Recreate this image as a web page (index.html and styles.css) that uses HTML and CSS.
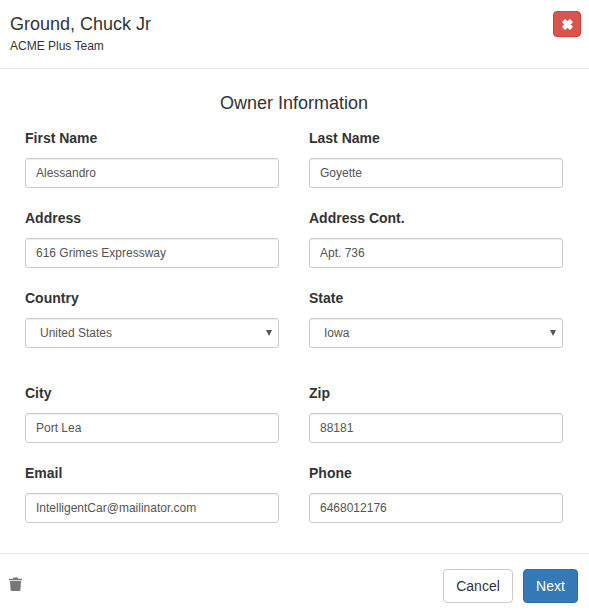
FILE: index.html
```html
<!DOCTYPE html>
<html lang="en">
<head>
<meta charset="utf-8">
<title>Owner Information</title>
<link rel="stylesheet" href="styles.css">
</head>
<body>
<div class="modal">
  <header class="modal-header">
    <div class="who">
      <h4 class="name">Ground, Chuck Jr</h4>
      <div class="team">ACME Plus Team</div>
    </div>
    <button class="close" type="button" aria-label="Close">
      <svg viewBox="0 0 12 12" width="13" height="13" aria-hidden="true"><path d="M1.4 3.2 3.2 1.4a.9.9 0 0 1 1.2 0L6 3l1.6-1.6a.9.9 0 0 1 1.2 0l1.800 1.800a.9.9 0 0 1 0 1.200L9 6l1.600 1.600a.9.9 0 0 1 0 1.200l-1.800 1.800a.9.9 0 0 1-1.200 0L6 9l-1.600 1.600a.9.9 0 0 1-1.200 0L1.400 8.800a.9.9 0 0 1 0-1.200L3 6 1.400 4.400a.9.9 0 0 1 0-1.200z" fill="#fff"/></svg>
    </button>
  </header>
  <main class="modal-body">
    <h4 class="section-title">Owner Information</h4>
    <form class="grid">
      <div class="field"><label>First Name</label><input class="control" type="text" value="Alessandro"></div>
      <div class="field"><label>Last Name</label><input class="control" type="text" value="Goyette"></div>
      <div class="field"><label>Address</label><input class="control" type="text" value="616 Grimes Expressway"></div>
      <div class="field"><label>Address Cont.</label><input class="control" type="text" value="Apt. 736"></div>
      <div class="field tall"><label>Country</label><div class="select-wrap"><select class="control select"><option>United States</option></select></div></div>
      <div class="field tall"><label>State</label><div class="select-wrap"><select class="control select"><option>Iowa</option></select></div></div>
      <div class="field"><label>City</label><input class="control" type="text" value="Port Lea"></div>
      <div class="field"><label>Zip</label><input class="control" type="text" value="88181"></div>
      <div class="field"><label>Email</label><input class="control" type="text" value="IntelligentCar@mailinator.com"></div>
      <div class="field"><label>Phone</label><input class="control" type="text" value="6468012176"></div>
    </form>
  </main>
  <footer class="modal-footer">
    <button class="trash" type="button" aria-label="Delete">
      <svg viewBox="0 0 13 14" width="13" height="14" aria-hidden="true"><path d="M4.500.5h4l.6 1.300H12.500a.5.5 0 0 1 .5.5v.9H0v-.9a.5.5 0 0 1 .5-.5h3.400zM1 4h11l-.6 9a1 1 0 0 1-1 1H2.600a1 1 0 0 1-1-1z" fill="#777"/></svg>
    </button>
    <div class="actions">
      <button class="btn btn-default" type="button">Cancel</button>
      <button class="btn btn-primary" type="button">Next</button>
    </div>
  </footer>
</div>
</body>
</html>
```

FILE: styles.css
```css
* { box-sizing: border-box; }
html, body { margin: 0; padding: 0; background: #fff; }
body { font-family: "Liberation Sans", Arial, sans-serif; font-size: 14px; color: #333; line-height: 20px; }
.modal { width: 589px; height: 615px; display: flex; flex-direction: column; }

.modal-header { height: 69px; border-bottom: 1px solid #e5e5e5; padding: 11px 8px 0 10px; display: flex; justify-content: space-between; align-items: flex-start; }
.name { margin: 3px 0 0; font-size: 18px; font-weight: 400; line-height: 20px; }
.team { font-size: 12px; line-height: 17px; margin-top: 4px; }
.close { width: 28px; height: 26px; padding: 0; background: #d9534f; border: 1px solid #d43f3a; border-radius: 4px; display: flex; align-items: center; justify-content: center; }

.modal-body { padding: 24px 26px 0 25px; flex: 0 0 484px; }
.section-title { margin: 0 0 15px; font-size: 18px; font-weight: 400; line-height: 20px; text-align: center; }
.grid { display: grid; grid-template-columns: 254px 254px; column-gap: 30px; margin: 0; }
.field { padding-bottom: 20px; }
.field.tall { padding-bottom: 35px; }
.field label { display: block; font-weight: 700; line-height: 20px; margin-bottom: 10px; }
.control { display: block; width: 100%; height: 30px; padding: 5px 10px; font: 12px/18px "Liberation Sans", Arial, sans-serif; color: #555; background: #fff; border: 1px solid #ccc; border-radius: 3px; box-shadow: inset 0 1px 1px rgba(0,0,0,.075); outline: none; }
.select { appearance: none; -webkit-appearance: none; padding-left: 14px; }
.select-wrap { position: relative; }
.select-wrap::after { content: ""; position: absolute; right: 7px; top: 12px; border-left: 3px solid transparent; border-right: 3px solid transparent; border-top: 6px solid #555; pointer-events: none; }

.modal-footer { border-top: 1px solid #e5e5e5; flex: 1; padding: 15px 11px 0 9px; display: flex; justify-content: space-between; align-items: flex-start; }
.trash { margin-top: 8px; padding: 0; border: 0; background: none; width: 13px; height: 14px; display: block; }
.trash svg { display: block; }
.actions { display: flex; gap: 10px; }
.btn { height: 34px; padding: 6px 12px; font: 14px/20px "Liberation Sans", Arial, sans-serif; border: 1px solid; border-radius: 4px; }
.btn-default { width: 70px; color: #333; background: #fff; border-color: #ccc; }
.btn-primary { width: 55px; color: #fff; background: #337ab7; border-color: #2e6da4; }
```
